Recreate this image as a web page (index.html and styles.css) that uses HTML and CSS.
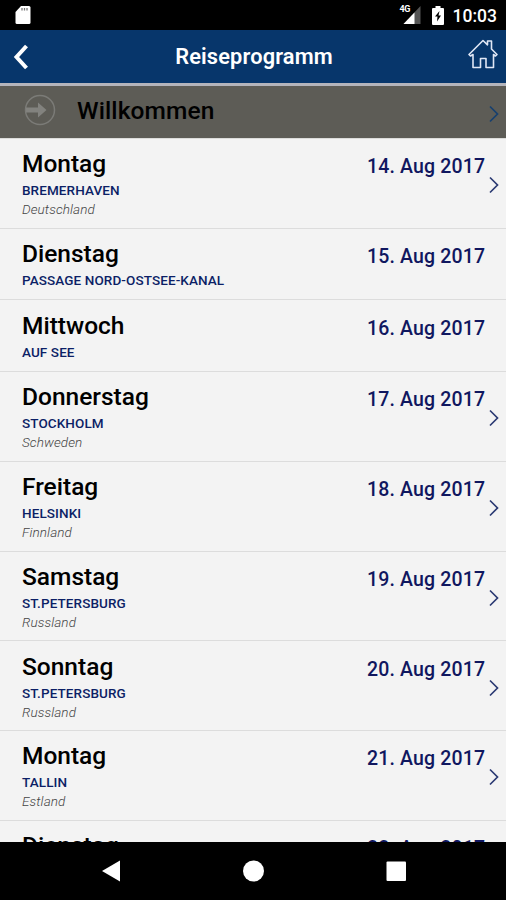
FILE: index.html
```
<!DOCTYPE html>
<html lang="de">
<head>
    <meta charset="UTF-8">
    <title>Reiseprogramm</title>
    <link rel="stylesheet" href="styles.css">
</head>
<body>

<div class="screen">
    <div class="statusbar">
        <svg class="sdcard" width="16" height="20" viewBox="0 0 16 20">
            <path d="M6 1h8q1.500 0 1.500 1.500v15q0 1.500-1.500 1.500H2q-1.500 0-1.500-1.500V7z" fill="#fff"/>
            <path d="M7 3v2.500M9.500 3v2.500M12 3v2.500" stroke="#777" stroke-width="1.300"/>
        </svg>
        <div class="status-right">
            <div class="signal">
                <span class="network">4G</span>
                <svg width="18" height="18" viewBox="0 0 18 18">
                    <path d="M17.500 0v18H0.500z" fill="#555"/>
                    <path d="M11.500 6.500V18H0.500z" fill="#fff"/>
                </svg>
            </div>
            <svg class="battery" width="12" height="19" viewBox="0 0 12 19">
                <path d="M3.500 0h5v2H11q1 0 1 1v15q0 1-1 1H1q-1 0-1-1V3q0-1 1-1h2.500z" fill="#fff"/>
                <path d="M7.500 5L3 10.500h2.500L5 15.500l4-6H6.500z" fill="#000"/>
            </svg>
            <span class="clock">10:03</span>
        </div>
    </div>

    <header class="header">
        <svg class="back" width="16" height="26" viewBox="0 0 16 26">
            <path d="M14.500 2L4.500 13l10 11" fill="none" stroke="#fff" stroke-width="4"/>
        </svg>
        <h1>Reiseprogramm</h1>
        <svg class="home" width="30" height="30" viewBox="0 0 30 30">
            <path d="M1 15.500L15 1.500l4.500 4.300V2h4v8l5.500 5.500-1.500 1.500-2-1.500V28.500H18V19.500h-5.500v9H5V15.500L2.500 17z" fill="none" stroke="#dfe6f5" stroke-width="1.600" stroke-linejoin="round"/>
        </svg>
    </header>

    <div class="welcome">
        <svg class="arrow" width="32" height="32" viewBox="0 0 32 32">
            <circle cx="16" cy="16" r="14.500" fill="none" stroke="#7b7b77" stroke-width="1.500"/>
            <path d="M2 13.500h12V8.500L22.500 16 14 23.500V18.500H2z" fill="#82827e"/>
        </svg>
        <span>Willkommen</span>
        <svg class="chevron" width="10" height="18" viewBox="0 0 10 18"><path d="M1 1.500L8.500 9 1 16.500"/></svg>
    </div>

    <div class="list">
        <div class="day">
            <div class="info"><h2>Montag</h2><p class="port">BREMERHAVEN</p><p class="country">Deutschland</p></div>
            <span class="date">14. Aug 2017</span>
            <svg class="chevron" width="10" height="18" viewBox="0 0 10 18"><path d="M1 1.500L8.500 9 1 16.500"/></svg>
        </div>
        <div class="day short">
            <div class="info"><h2>Dienstag</h2><p class="port">PASSAGE NORD-OSTSEE-KANAL</p></div>
            <span class="date">15. Aug 2017</span>
        </div>
        <div class="day short">
            <div class="info"><h2>Mittwoch</h2><p class="port">AUF SEE</p></div>
            <span class="date">16. Aug 2017</span>
        </div>
        <div class="day">
            <div class="info"><h2>Donnerstag</h2><p class="port">STOCKHOLM</p><p class="country">Schweden</p></div>
            <span class="date">17. Aug 2017</span>
            <svg class="chevron" width="10" height="18" viewBox="0 0 10 18"><path d="M1 1.500L8.500 9 1 16.500"/></svg>
        </div>
        <div class="day">
            <div class="info"><h2>Freitag</h2><p class="port">HELSINKI</p><p class="country">Finnland</p></div>
            <span class="date">18. Aug 2017</span>
            <svg class="chevron" width="10" height="18" viewBox="0 0 10 18"><path d="M1 1.500L8.500 9 1 16.500"/></svg>
        </div>
        <div class="day">
            <div class="info"><h2>Samstag</h2><p class="port">ST.PETERSBURG</p><p class="country">Russland</p></div>
            <span class="date">19. Aug 2017</span>
            <svg class="chevron" width="10" height="18" viewBox="0 0 10 18"><path d="M1 1.500L8.500 9 1 16.500"/></svg>
        </div>
        <div class="day">
            <div class="info"><h2>Sonntag</h2><p class="port">ST.PETERSBURG</p><p class="country">Russland</p></div>
            <span class="date">20. Aug 2017</span>
            <svg class="chevron" width="10" height="18" viewBox="0 0 10 18"><path d="M1 1.500L8.500 9 1 16.500"/></svg>
        </div>
        <div class="day">
            <div class="info"><h2>Montag</h2><p class="port">TALLIN</p><p class="country">Estland</p></div>
            <span class="date">21. Aug 2017</span>
            <svg class="chevron" width="10" height="18" viewBox="0 0 10 18"><path d="M1 1.500L8.500 9 1 16.500"/></svg>
        </div>
        <div class="day">
            <div class="info"><h2>Dienstag</h2></div>
            <span class="date">22. Aug 2017</span>
        </div>
    </div>

    <nav class="navbar">
        <svg width="506" height="58" viewBox="0 0 506 58" fill="#fff">
            <path d="M102 29L120 18.500v21z"/>
            <circle cx="253.500" cy="29" r="10.500"/>
            <rect x="386.500" y="19.500" width="19.500" height="19.500" rx="1"/>
        </svg>
    </nav>
</div>

</body>
</html>
```
FILE: styles.css
```
body {
    margin: 0;
    font-family: Roboto, sans-serif;
    background: #000;
}
h1, h2, p {
    margin: 0;
}
svg {
    display: block;
    flex: none;
}
.screen {
    width: 506px;
    height: 900px;
    display: flex;
    flex-direction: column;
    overflow: hidden;
}
.statusbar {
    height: 30px;
    flex: none;
    box-sizing: border-box;
    padding: 0 9px 0 15px;
    display: flex;
    justify-content: space-between;
    align-items: center;
    background: #000;
}
.status-right {
    display: flex;
    align-items: center;
}
.signal {
    position: relative;
    margin-right: 11px;
}
.network {
    position: absolute;
    left: -3px;
    top: -1px;
    font-size: 9px;
    line-height: 9px;
    font-weight: 700;
    letter-spacing: -0.5px;
    color: #fff;
}
.battery {
    margin-right: 9px;
}
.clock {
    font-size: 17.5px;
    font-weight: 500;
    line-height: 30px;
    padding-top: 2px;
    color: #fff;
}
.header {
    height: 53px;
    flex: none;
    box-sizing: border-box;
    padding: 0 8px 0 12px;
    display: flex;
    align-items: center;
    justify-content: space-between;
    background: #07366b;
}
.header h1 {
    padding-left: 12px;
    font-size: 21.8px;
    font-weight: 600;
    letter-spacing: 0.15px;
    color: #fff;
}
.home {
    margin-bottom: 5px;
}
.welcome {
    height: 55px;
    flex: none;
    box-sizing: border-box;
    border-top: 3px solid #b4b4bb;
    padding: 0 7px 0 24px;
    display: flex;
    align-items: center;
    background: #5d5c56;
}
.welcome span {
    flex: 1;
    margin-left: 21px;
    font-size: 24.5px;
    font-weight: 500;
    letter-spacing: 0.1px;
    line-height: 28px;
    padding-bottom: 3px;
    color: #000;
}
.arrow {
    margin-bottom: 5px;
}
.welcome .chevron {
    margin-top: 3px;
}
.chevron path {
    fill: none;
    stroke: #2b3a73;
    stroke-width: 1.7;
}
.welcome .chevron path {
    stroke: #17406f;
}
.list {
    flex: 1;
    min-height: 0;
    overflow: hidden;
    background: #f3f3f3;
    border-top: 1px solid #dcdcda;
}
.day {
    height: 89.8px;
    box-sizing: border-box;
    padding: 10.3px 7px 0 22px;
    display: flex;
    align-items: flex-start;
    border-bottom: 1px solid #dcdcdc;
}
.day.short {
    height: 71.6px;
}
.info {
    flex: 1;
}
.info h2 {
    font-size: 24.5px;
    font-weight: 500;
    line-height: 30px;
    color: #000;
}
.port {
    margin-top: 2px;
    font-size: 13.5px;
    font-weight: 500;
    letter-spacing: 0.1px;
    line-height: 18px;
    color: #0c1f66;
}
.country {
    font-size: 13.5px;
    font-weight: 300;
    font-style: italic;
    letter-spacing: 0.1px;
    line-height: 20px;
    color: #444;
}
.date {
    width: 118px;
    margin-right: 4px;
    font-size: 19.5px;
    font-weight: 500;
    letter-spacing: 0.15px;
    line-height: 35px;
    white-space: nowrap;
    color: #10175f;
}
.day .chevron {
    margin-top: 27px;
}
.short .date,
.day .date:last-child {
    margin-right: 14px;
}
.navbar {
    height: 58px;
    flex: none;
    background: #000;
}
```
